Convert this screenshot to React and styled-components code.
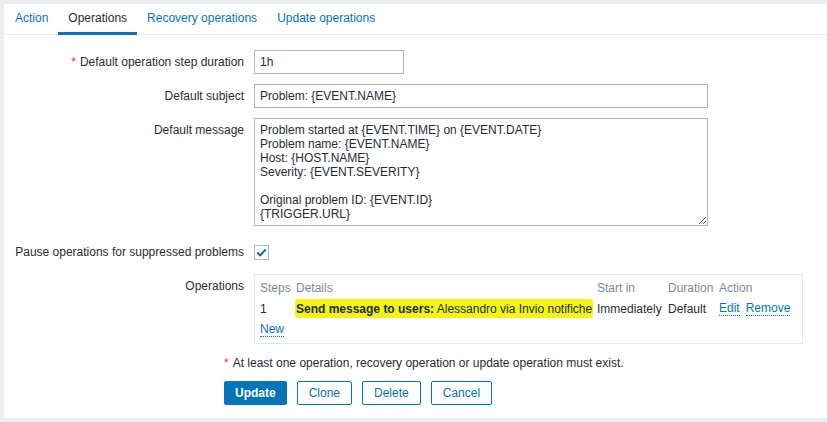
import React from 'react';
import styled, { createGlobalStyle } from 'styled-components';

const GlobalStyle = createGlobalStyle`
  html, body {
    margin: 0;
    padding: 0;
    background: #ebeef0;
  }
  body {
    font-family: "Liberation Sans", Arial, sans-serif;
    font-size: 12px;
    line-height: 14px;
    color: #1f2c33;
  }
`;

const Page = styled.div`
  padding: 4px 0 4px 4px;
`;

const Panel = styled.div`
  background: #ffffff;
  height: 414px;
  box-sizing: border-box;
`;

const TabBar = styled.nav`
  display: flex;
  align-items: flex-start;
  height: 30px;
  padding-left: 1px;
  border-bottom: 1px solid #ebeef0;
`;

const Tab = styled.a`
  display: block;
  padding: 7px 10px;
  line-height: 14px;
  border-bottom: 3px solid ${p => (p.$active ? '#0275b8' : 'transparent')};
  color: ${p => (p.$active ? '#1f2c33' : '#0275b8')};
  text-decoration: none;
  white-space: nowrap;
  cursor: pointer;
`;

const Form = styled.div`
  display: grid;
  grid-template-columns: 240px 549px;
  column-gap: 10px;
  row-gap: 10px;
  padding-top: 15px;
`;

const Label = styled.div`
  text-align: right;
  white-space: nowrap;
  padding-top: ${p => (p.$center ? '0' : '5px')};
  align-self: ${p => (p.$center ? 'center' : 'start')};
`;

const Required = styled.span`
  color: #e33734;
  margin-right: 4px;
`;

const Field = styled.div`
  display: flex;
  align-items: ${p => (p.$center ? 'center' : 'flex-start')};
  min-height: ${p => (p.$center ? '24px' : '0')};
`;

const TextInput = styled.input`
  box-sizing: border-box;
  width: ${p => p.$width}px;
  height: 24px;
  margin: 0;
  padding: 0 5px;
  border: 1px solid #b4b4b4;
  border-radius: 0;
  background: #fff;
  font: inherit;
  color: #1f2c33;
  outline: none;
`;

const TextArea = styled.textarea`
  display: block;
  box-sizing: border-box;
  width: 454px;
  height: 108px;
  margin: 0 0 4px;
  padding: 4px 5px;
  border: 1px solid #b4b4b4;
  border-radius: 0;
  background: #fff;
  font: inherit;
  line-height: 14px;
  color: #1f2c33;
  outline: none;
  overflow: auto;
`;

const CheckBox = styled.span`
  display: inline-flex;
  align-items: center;
  justify-content: center;
  box-sizing: border-box;
  width: 15px;
  height: 15px;
  border: 1px solid #acbbc2;
  background: #fff;
`;

const OpsBox = styled.div`
  box-sizing: border-box;
  width: 549px;
  border: 1px solid #e4e8ea;
  padding: 2px 5px 3px;
  display: grid;
  grid-template-columns: 36px 301px 71px 51px auto;
  grid-auto-rows: 21px;
  align-items: center;
`;

const HeadCell = styled.div`
  color: #768d99;
  white-space: nowrap;
`;

const Cell = styled.div`
  white-space: nowrap;
  display: flex;
  gap: 6px;
`;

const Marked = styled.span`
  background: #f4f414;
  padding: 3px 1px 2px;
  margin-left: -1px;
  border-radius: 3px;
`;

const Strong = styled.b`
  font-weight: bold;
`;

const Link = styled.a`
  color: #0275b8;
  text-decoration: none;
  border-bottom: 1px dotted #0275b8;
  line-height: 13px;
  cursor: pointer;
`;

const Footer = styled.div`
  padding-left: 220px;
  padding-top: 12px;
`;

const Note = styled.div`
  line-height: 14px;
`;

const Buttons = styled.div`
  display: flex;
  gap: 10px;
  margin-top: 11px;
`;

const Button = styled.button`
  box-sizing: border-box;
  height: 24px;
  margin: 0;
  padding: 0 ${p => (p.$primary ? '10px' : '11px')};
  border: 1px solid #0275b8;
  border-radius: 2px;
  background: ${p => (p.$primary ? '#0275b8' : '#ffffff')};
  color: ${p => (p.$primary ? '#ffffff' : '#0275b8')};
  font-family: inherit;
  font-size: 12px;
  font-weight: ${p => (p.$primary ? 'bold' : 'normal')};
  cursor: pointer;
`;

const message = `Problem started at {EVENT.TIME} on {EVENT.DATE}
Problem name: {EVENT.NAME}
Host: {HOST.NAME}
Severity: {EVENT.SEVERITY}

Original problem ID: {EVENT.ID}
{TRIGGER.URL}`;

const tabs = ['Action', 'Operations', 'Recovery operations', 'Update operations'];

export default function App() {
  return (
    <>
      <GlobalStyle />
      <Page>
        <Panel>
          <TabBar>
            {tabs.map(t => (
              <Tab key={t} $active={t === 'Operations'}>{t}</Tab>
            ))}
          </TabBar>

          <Form>
            <Label><Required>*</Required>Default operation step duration</Label>
            <Field><TextInput $width={150} defaultValue="1h" /></Field>

            <Label>Default subject</Label>
            <Field><TextInput $width={454} defaultValue="Problem: {EVENT.NAME}" /></Field>

            <Label>Default message</Label>
            <Field><TextArea defaultValue={message} spellCheck={false} /></Field>

            <Label $center>Pause operations for suppressed problems</Label>
            <Field $center>
              <CheckBox>
                <svg width="11" height="9" viewBox="0 0 11 9">
                  <path d="M1.2 4.6 L4.2 7.4 L9.8 1.4" fill="none" stroke="#0d6aa8" strokeWidth="2" />
                </svg>
              </CheckBox>
            </Field>

            <Label>Operations</Label>
            <Field>
              <OpsBox>
                <HeadCell>Steps</HeadCell>
                <HeadCell>Details</HeadCell>
                <HeadCell>Start in</HeadCell>
                <HeadCell>Duration</HeadCell>
                <HeadCell>Action</HeadCell>

                <Cell>1</Cell>
                <Cell>
                  <Marked><Strong>Send message to users:</Strong> Alessandro via Invio notifiche</Marked>
                </Cell>
                <Cell>Immediately</Cell>
                <Cell>Default</Cell>
                <Cell><Link>Edit</Link><Link>Remove</Link></Cell>

                <Cell><Link>New</Link></Cell>
              </OpsBox>
            </Field>
          </Form>

          <Footer>
            <Note><Required>*</Required>At least one operation, recovery operation or update operation must exist.</Note>
            <Buttons>
              <Button $primary>Update</Button>
              <Button>Clone</Button>
              <Button>Delete</Button>
              <Button>Cancel</Button>
            </Buttons>
          </Footer>
        </Panel>
      </Page>
    </>
  );
}
